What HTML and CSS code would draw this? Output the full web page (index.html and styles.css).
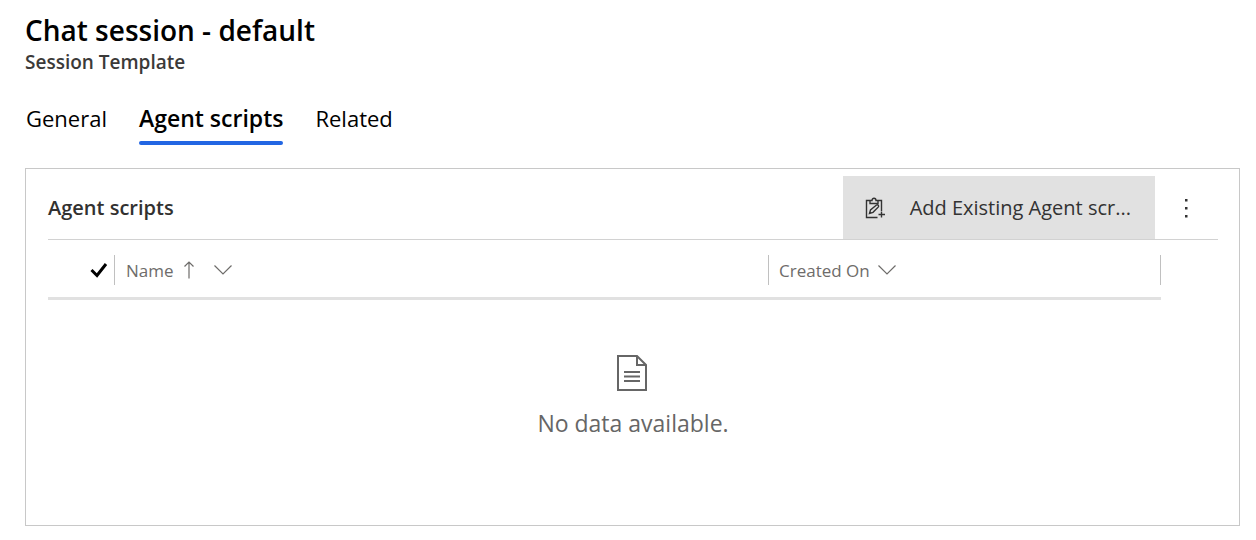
FILE: index.html
```html
<!DOCTYPE html>
<html lang="en">
<head>
<meta charset="utf-8">
<meta name="viewport" content="width=device-width, initial-scale=1">
<title>Chat session - default</title>
<link rel="stylesheet" href="styles.css">
</head>
<body>
<header class="record">
  <h1 class="record-title">Chat session - default</h1>
  <p class="record-type">Session Template</p>
</header>
<nav class="tabs" role="tablist" aria-label="Form sections">
  <button class="tab" type="button" role="tab" aria-selected="false">General</button>
  <button class="tab tab-active" type="button" role="tab" aria-selected="true">Agent scripts</button>
  <button class="tab" type="button" role="tab" aria-selected="false">Related</button>
</nav>
<main class="panel">
  <div class="toolbar">
    <h2 class="toolbar-title">Agent scripts</h2>
    <button class="command" type="button">
      <svg class="command-icon" viewBox="0 0 20 22" width="20" height="22" fill="none" stroke="currentColor" stroke-width="1.4" aria-hidden="true">
        <path d="M5 3.500H1.500v17h11M13 3.500h3.500v10.500M5 6.500v-3h2c0-3 4-3 4 0h2v3zM16.500 14.500v6M13.500 17.500h6.500"/>
        <path d="M4.500 16.500l1-3.500 6-5c1.300-.8 2.700.6 1.900 1.900l-5.400 5.400z"/>
      </svg>
      <span>Add Existing Agent scr...</span>
    </button>
    <button class="more" type="button" aria-label="More commands">
      <svg viewBox="0 0 4 20" width="4" height="20" fill="currentColor" aria-hidden="true">
        <path d="M0 1h2.500v2.500H0zM0 9h2.500v2.500H0zM0 17h2.500v2.500H0z"/>
      </svg>
    </button>
  </div>
  <table class="grid">
    <thead>
      <tr>
        <th class="col-check" scope="col">
          <button class="head head-check" type="button" aria-label="Select all">
            <svg viewBox="0 0 18 16" width="18" height="16" fill="none" stroke="currentColor" stroke-width="3" aria-hidden="true"><path d="M1.500 8l5.500 5.500L16 2"/></svg>
          </button>
        </th>
        <th class="col-name" scope="col" aria-sort="ascending">
          <button class="head head-name" type="button">
            <span>Name</span>
            <svg class="sort" viewBox="0 0 12 18" width="12" height="18" fill="none" stroke="currentColor" stroke-width="1.200" aria-hidden="true"><path d="M6 17.500V.8M1.500 5.500L6 1l4.500 4.500"/></svg>
            <svg viewBox="0 0 18 10" width="18" height="10" fill="none" stroke="currentColor" stroke-width="1.200" aria-hidden="true"><path d="M.5.5L9 9 17.500.5"/></svg>
          </button>
        </th>
        <th class="col-created" scope="col">
          <button class="head head-created" type="button">
            <span>Created On</span>
            <svg viewBox="0 0 18 10" width="18" height="10" fill="none" stroke="currentColor" stroke-width="1.200" aria-hidden="true"><path d="M.5.5L9 9 17.500.5"/></svg>
          </button>
        </th>
      </tr>
    </thead>
  </table>
  <div class="empty">
    <svg viewBox="0 0 32 38" width="32" height="38" fill="none" stroke="currentColor" stroke-width="2" aria-hidden="true">
      <path d="M1 2h19l9 9v25H1zM20 2v9h9M7 18h16M7 22.500h16M7 27h16"/>
    </svg>
    <p class="empty-text">No data available.</p>
  </div>
</main>
</body>
</html>
```
FILE: styles.css
```css
* {
  box-sizing: border-box;
}

body {
  margin: 0;
  padding: 12px 16px 14px 25px;
  background: #fff;
  color: #000;
  font-family: "Segoe UI", "Open Sans", "Noto Sans", sans-serif;
}

h1, h2, p {
  margin: 0;
}

button {
  padding: 0;
  border: 0;
  background: none;
  color: inherit;
  font: inherit;
  cursor: pointer;
}

svg {
  display: block;
  flex: none;
}

.record-title {
  font-size: 28px;
  line-height: 36px;
  font-weight: 600;
}

.record-type {
  font-size: 19px;
  line-height: 28px;
  font-weight: 600;
  color: #3b3a39;
}

.tabs {
  display: flex;
  gap: 32px;
  margin-top: 26px;
  padding-left: 1px;
}

.tab {
  padding-bottom: 10px;
  font-size: 22px;
  line-height: 33px;
}

.tab-active {
  position: relative;
  font-size: 23px;
  font-weight: 600;
}

.tab-active::after {
  content: "";
  position: absolute;
  left: 0;
  right: 0;
  bottom: 0;
  height: 4px;
  border-radius: 2px;
  background: #2266e3;
}

.panel {
  margin-top: 23px;
  padding: 7px 21px 85px 22px;
  border: 1px solid #c8c8c8;
}

.toolbar {
  display: flex;
  align-items: center;
  border-bottom: 1px solid #d2d2d2;
}

.toolbar-title {
  flex: 1;
  font-size: 20px;
  font-weight: 600;
  color: #323130;
}

.command {
  display: flex;
  align-items: center;
  gap: 25px;
  height: 63px;
  padding: 0 24px 0 22px;
  background: #e1e1e1;
  color: #333;
  font-size: 20px;
  white-space: nowrap;
}

.more {
  display: flex;
  align-items: center;
  justify-content: center;
  width: 63px;
  height: 63px;
  color: #333;
}

.grid {
  width: calc(100% - 57px);
  table-layout: fixed;
  border-collapse: collapse;
  border-bottom: 3px solid #e1e1e1;
}

.grid th {
  padding: 15px 0 12px;
  font-weight: 400;
  text-align: left;
}

.col-check {
  width: 66px;
}

.col-created {
  width: 393px;
}

.head {
  display: flex;
  align-items: center;
  width: 100%;
  height: 30px;
  color: #6e6c6a;
  font-size: 17px;
}

.head-check {
  justify-content: flex-end;
  padding-right: 6px;
  color: #000;
}

.head-name {
  gap: 19px;
  padding-left: 11px;
  border-left: 1px solid #c0c0c0;
}

.sort {
  margin-left: -10px;
}

.head-created {
  gap: 8px;
  padding-left: 10px;
  border: solid #c0c0c0;
  border-width: 0 1px;
}

.empty {
  display: flex;
  flex-direction: column;
  align-items: center;
  gap: 15px;
  padding-top: 54px;
  color: #666;
}

.empty-text {
  font-size: 23px;
  line-height: 33px;
}
```
